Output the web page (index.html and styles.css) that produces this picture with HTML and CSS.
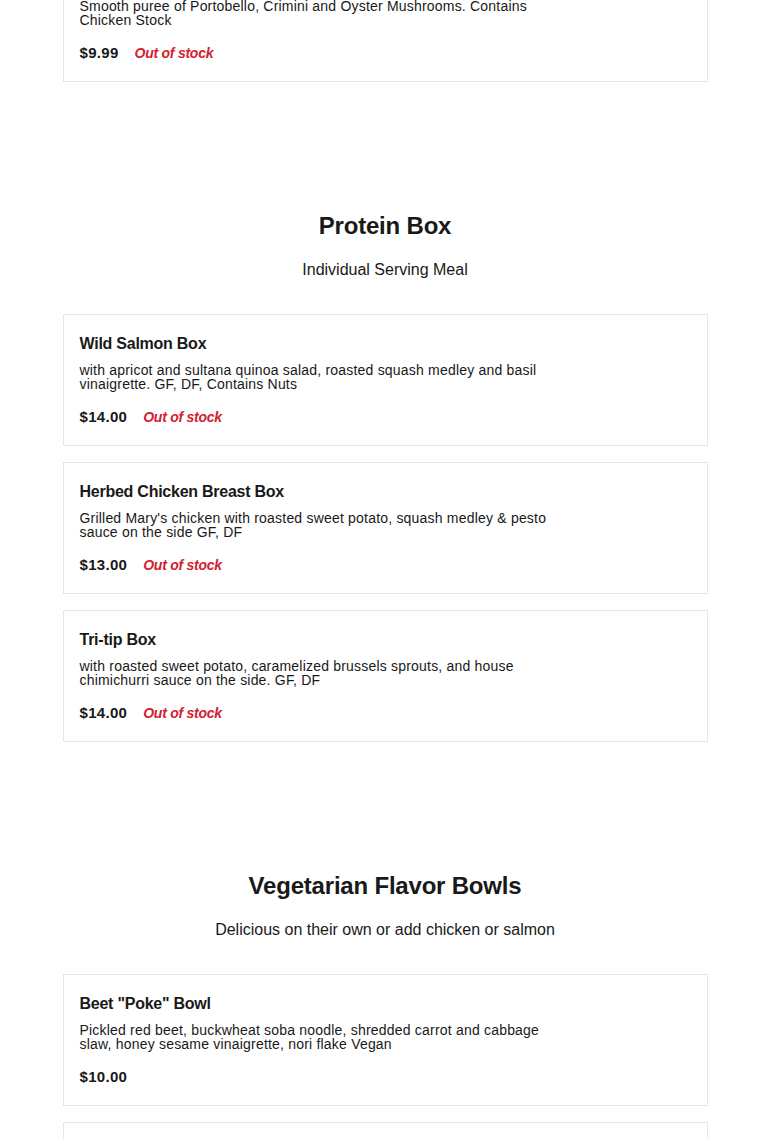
FILE: index.html
```html
<!DOCTYPE html>
<html lang="en">
<head>
<meta charset="utf-8">
<title>Menu</title>
<link rel="stylesheet" href="styles.css">
</head>
<body>
<main class="menu">
  <section class="category category-first">
    <div class="items">
      <article class="item">
        <h3 class="item-name">Mushroom Soup</h3>
        <p class="item-desc">Smooth puree of Portobello, Crimini and Oyster Mushrooms. Contains Chicken Stock</p>
        <div class="item-meta"><span class="price">$9.99</span><span class="stock">Out of stock</span></div>
      </article>
    </div>
  </section>

  <section class="category">
    <header class="cat-head">
      <h2 class="cat-title">Protein Box</h2>
      <p class="cat-sub">Individual Serving Meal</p>
    </header>
    <div class="items">
      <article class="item">
        <h3 class="item-name">Wild Salmon Box</h3>
        <p class="item-desc">with apricot and sultana quinoa salad, roasted squash medley and basil vinaigrette. GF, DF, Contains Nuts</p>
        <div class="item-meta"><span class="price">$14.00</span><span class="stock">Out of stock</span></div>
      </article>
      <article class="item">
        <h3 class="item-name">Herbed Chicken Breast Box</h3>
        <p class="item-desc">Grilled Mary's chicken with roasted sweet potato, squash medley &amp; pesto sauce on the side GF, DF</p>
        <div class="item-meta"><span class="price">$13.00</span><span class="stock">Out of stock</span></div>
      </article>
      <article class="item">
        <h3 class="item-name">Tri-tip Box</h3>
        <p class="item-desc">with roasted sweet potato, caramelized brussels sprouts, and house chimichurri sauce on the side. GF, DF</p>
        <div class="item-meta"><span class="price">$14.00</span><span class="stock">Out of stock</span></div>
      </article>
    </div>
  </section>

  <section class="category">
    <header class="cat-head">
      <h2 class="cat-title">Vegetarian Flavor Bowls</h2>
      <p class="cat-sub">Delicious on their own or add chicken or salmon</p>
    </header>
    <div class="items">
      <article class="item">
        <h3 class="item-name">Beet "Poke" Bowl</h3>
        <p class="item-desc">Pickled red beet, buckwheat soba noodle, shredded carrot and cabbage slaw, honey sesame vinaigrette, nori flake Vegan</p>
        <div class="item-meta"><span class="price">$10.00</span></div>
      </article>
      <article class="item">
        <h3 class="item-name">Falafel Bowl</h3>
        <p class="item-desc">Herbed falafel, hummus, cucumber tomato salad, pickled onion, tahini sauce Vegan</p>
        <div class="item-meta"><span class="price">$10.00</span></div>
      </article>
    </div>
  </section>
</main>
</body>
</html>
```
FILE: styles.css
```css
* { box-sizing: border-box; }
html, body { margin: 0; padding: 0; background: #fff; }
body {
  font-family: "Liberation Sans", Arial, sans-serif;
  color: #191919;
  overflow: hidden;
}
.menu {
  width: 645px;
  margin: 0 auto;
  display: flex;
  flex-direction: column;
  gap: 128px;
}
.category-first { margin-top: -50px; }
.cat-head {
  display: flex;
  flex-direction: column;
  align-items: center;
  gap: 16px;
  margin-bottom: 32px;
}
.cat-title {
  margin: 0;
  font-size: 24px;
  line-height: 32px;
  font-weight: 700;
  letter-spacing: -0.2px;
}
.cat-sub {
  margin: 0;
  font-size: 16px;
  line-height: 24px;
}
.items {
  display: flex;
  flex-direction: column;
  gap: 16px;
}
.item {
  border: 1px solid #e6e6e6;
  padding: 19px 16px 18px;
  display: flex;
  flex-direction: column;
}
.item-name {
  margin: 0;
  font-size: 16px;
  line-height: 20px;
  font-weight: 700;
  letter-spacing: -0.25px;
}
.item-desc {
  margin: 9px 0 0;
  max-width: 480px;
  font-size: 14px;
  line-height: 14px;
  letter-spacing: 0.2px;
}
.item-meta {
  margin-top: 16px;
  display: flex;
  align-items: center;
  gap: 16px;
  line-height: 20px;
}
.price {
  font-size: 15px;
  font-weight: 700;
  letter-spacing: 0.3px;
}
.stock {
  font-size: 14px;
  font-weight: 700;
  font-style: italic;
  letter-spacing: -0.25px;
  color: #d3212f;
}
```
